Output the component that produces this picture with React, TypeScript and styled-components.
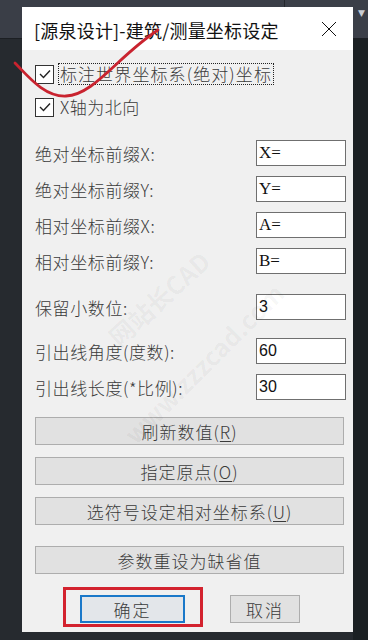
import React from 'react'
import styled, { createGlobalStyle } from 'styled-components'

const GlobalStyle = createGlobalStyle`
  html, body {
    margin: 0;
    padding: 0;
    background: #23272c;
  }
  * {
    box-sizing: border-box;
  }
`

const cjk = `"Noto Sans CJK SC", "Noto Sans", sans-serif`

const labels = [
  { text: '绝对坐标前缀X:', value: 'X=', serif: true, gap: 0 },
  { text: '绝对坐标前缀Y:', value: 'Y=', serif: true, gap: 10 },
  { text: '相对坐标前缀X:', value: 'A=', serif: true, gap: 10 },
  { text: '相对坐标前缀Y:', value: 'B=', serif: true, gap: 10 },
  { text: '保留小数位:', value: '3', serif: false, gap: 20 },
  { text: '引出线角度(度数):', value: '60', serif: false, gap: 18 },
  { text: '引出线长度(*比例):', value: '30', serif: false, gap: 10 },
]

const actions = [
  { text: '刷新数值(', key: 'R', gap: 17 },
  { text: '指定原点(', key: 'O', gap: 12 },
  { text: '选符号设定相对坐标系(', key: 'U', gap: 12 },
]

const CheckMark = () => (
  <svg width="14" height="14" viewBox="0 0 14 14">
    <polyline points="2,7 5.5,10.5 12,3.5" fill="none" stroke="#222" strokeWidth="1.4" />
  </svg>
)

const App: React.FC = () => {
  return (
    <Page>
      <GlobalStyle />
      <TopBand>
        <BandLeft />
        <BandRight>
          <DropArrow>▼</DropArrow>
        </BandRight>
      </TopBand>
      <Lower />

      <Dialog>
        <TitleBar>
          <Title>[源泉设计]-建筑/测量坐标设定</Title>
          <CloseIcon width="16" height="16" viewBox="0 0 16 16">
            <line x1="1" y1="1" x2="15" y2="15" stroke="#111" strokeWidth="1" />
            <line x1="15" y1="1" x2="1" y2="15" stroke="#111" strokeWidth="1" />
          </CloseIcon>
        </TitleBar>
        <Body>
          <CheckRow>
            <Box>
              <CheckMark />
            </Box>
            <CheckLabel focused>标注世界坐标系(绝对)坐标</CheckLabel>
          </CheckRow>
          <CheckRow second>
            <Box>
              <CheckMark />
            </Box>
            <CheckLabel>X轴为北向</CheckLabel>
          </CheckRow>

          <Fields>
            {labels.map((f) => (
              <FieldRow key={f.text} gap={f.gap}>
                <FieldLabel>{f.text}</FieldLabel>
                <Input serif={f.serif}>{f.value}</Input>
              </FieldRow>
            ))}
          </Fields>

          <Actions>
            {actions.map((a) => (
              <WideButton key={a.key} gap={a.gap}>
                {a.text}
                <u>{a.key}</u>)
              </WideButton>
            ))}
            <WideButton gap={21}>参数重设为缺省值</WideButton>
          </Actions>

          <Footer>
            <SmallButton primary>确定</SmallButton>
            <SmallButton>取消</SmallButton>
          </Footer>
        </Body>
      </Dialog>

      <Watermark>
        <MarkText style={{ left: 112, top: 322, transform: 'rotate(-42deg)' }}>网站长CAD</MarkText>
        <MarkText style={{ left: 128, top: 420, transform: 'rotate(-45deg)' }}>www.zzzcad.com</MarkText>
      </Watermark>

      {/* hand-drawn red marks on top of the screenshot */}
      <Annotation width="368" height="640" viewBox="0 0 368 640">
        <path
          d="M15 63 C 28 76, 44 97, 66 96 C 94 95, 118 56, 158 30"
          fill="none"
          stroke="#c9232f"
          strokeWidth="2.8"
          strokeLinecap="round"
        />
        <rect x="64.5" y="588.5" width="137" height="37" fill="none" stroke="#d3222e" strokeWidth="3" />
      </Annotation>
    </Page>
  )
}

const Page = styled.div`
  position: relative;
  width: 368px;
  height: 640px;
  overflow: hidden;
  background: #23272c;
  display: flex;
  flex-direction: column;
`

const TopBand = styled.div`
  height: 39px;
  display: flex;
  border-bottom: 1px solid #1c1f23;
`

const BandLeft = styled.div`
  width: 285px;
  background: #3a3e47;
  border-right: 1px solid #24272c;
`

const BandRight = styled.div`
  flex: 1;
  background: #3b3f48;
  display: flex;
  justify-content: flex-end;
  align-items: center;
  padding-right: 3px;
`

const DropArrow = styled.span`
  font-family: "DejaVu Sans", sans-serif;
  font-size: 9px;
  color: #c9ccd2;
  margin-top: -12px;
`

const Lower = styled.div`
  flex: 1;
  background: linear-gradient(to right, #262a2f 0, #262a2f 353px, #1b2023 353px);
`

const Dialog = styled.div`
  position: absolute;
  left: 22px;
  top: 7px;
  width: 331px;
  height: 625px;
  background: #f0f0f0;
  display: flex;
  flex-direction: column;
  z-index: 1;
`

const TitleBar = styled.div`
  height: 43px;
  background: #ffffff;
  display: flex;
  align-items: center;
  justify-content: space-between;
  padding: 0 16px 0 12px;
`

const Title = styled.span`
  font-family: ${cjk};
  font-size: 18px;
  color: #111;
  letter-spacing: 0.2px;
  margin-top: 2px;
`

const CloseIcon = styled.svg`
  display: block;
`

const Body = styled.div`
  flex: 1;
  display: flex;
  flex-direction: column;
  padding: 14px 9px 0 13px;
  font-family: ${cjk};
  font-weight: 300;
  color: #3a3a3a;
`

const CheckRow = styled.div<{ second?: boolean }>`
  display: flex;
  align-items: center;
  height: 20px;
  margin-top: ${({ second }) => (second ? '13px' : '0')};
`

const Box = styled.div`
  width: 19px;
  height: 19px;
  border: 1px solid #333;
  background: #fff;
  display: flex;
  align-items: center;
  justify-content: center;
  margin-right: 4px;
`

const CheckLabel = styled.span<{ focused?: boolean }>`
  font-size: 17px;
  line-height: 20px;
  padding: 0 1px;
  letter-spacing: ${({ focused }) => (focused ? '1.1px' : '0.5px')};
  border: 1px dotted ${({ focused }) => (focused ? '#222' : 'transparent')};
`

const Fields = styled.div`
  display: flex;
  flex-direction: column;
  margin-top: 23px;
`

const FieldRow = styled.div<{ gap: number }>`
  display: flex;
  align-items: center;
  justify-content: space-between;
  height: 26px;
  margin-top: ${({ gap }) => gap}px;
`

const FieldLabel = styled.span`
  font-size: 17px;
  letter-spacing: 0.6px;
`

const Input = styled.div<{ serif?: boolean }>`
  width: 90px;
  height: 26px;
  border: 1px solid #6f6f6f;
  background: #fff;
  margin-right: -2px;
  padding-left: 2px;
  display: flex;
  align-items: center;
  font-family: ${({ serif }) => (serif ? '"Liberation Serif", serif' : '"Liberation Sans", sans-serif')};
  font-weight: 400;
  font-size: ${({ serif }) => (serif ? '17px' : '16px')};
  color: #111;
`

const Actions = styled.div`
  display: flex;
  flex-direction: column;
`

const WideButton = styled.div<{ gap: number }>`
  height: 28px;
  margin-top: ${({ gap }) => gap}px;
  border: 1px solid #adadad;
  background: #e1e1e1;
  display: flex;
  align-items: center;
  justify-content: center;
  font-size: 17px;
  letter-spacing: 1px;

  u {
    text-underline-offset: 2px;
  }
`

const Footer = styled.div`
  display: flex;
  align-items: center;
  margin-top: 21px;
  padding-left: 45px;
  gap: 45px;
`

const SmallButton = styled.div<{ primary?: boolean }>`
  width: ${({ primary }) => (primary ? '105px' : '70px')};
  height: 28px;
  border: ${({ primary }) => (primary ? '2px solid #1a78c9' : '1px solid #adadad')};
  background: ${({ primary }) => (primary ? '#e3e6ea' : '#e1e1e1')};
  display: flex;
  align-items: center;
  justify-content: center;
  font-size: 17px;
  letter-spacing: 2px;
`

const Watermark = styled.div`
  position: absolute;
  inset: 0;
  pointer-events: none;
  z-index: 2;
`

const MarkText = styled.span`
  position: absolute;
  font-family: ${cjk};
  font-size: 25px;
  font-weight: 700;
  color: rgba(0, 0, 0, 0.045);
  transform-origin: left center;
  white-space: nowrap;
`

const Annotation = styled.svg`
  position: absolute;
  left: 0;
  top: 0;
  pointer-events: none;
  z-index: 3;
`

export default App
